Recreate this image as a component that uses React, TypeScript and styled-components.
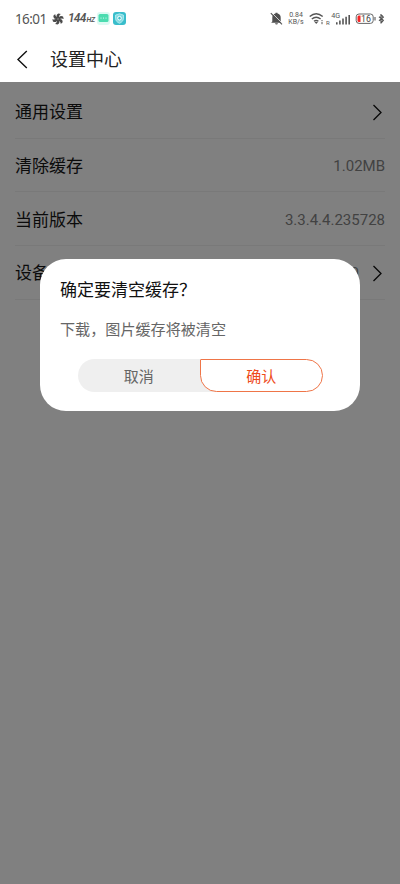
import React from "react";
import styled, { createGlobalStyle } from "styled-components";

const Global = createGlobalStyle`
  * { box-sizing: border-box; }
  body {
    margin: 0;
    background: #808080;
    font-family: Roboto, "Noto Sans CJK SC", sans-serif;
    color: #111;
  }
`;

const Screen = styled.div`
  position: relative;
  width: 400px;
  height: 884px;
  overflow: hidden;
  background: #808080;
`;

const StatusBar = styled.div`
  display: flex;
  justify-content: space-between;
  height: 37px;
  padding: 0 15px;
  background: #fff;
  color: #555;
`;

const StatusGroup = styled.div`
  display: flex;
  align-items: center;
  height: 37px;
`;

const Clock = styled.span`
  width: 31px;
  font: 400 13.5px/16px "Noto Sans", sans-serif;
  letter-spacing: -0.6px;
  white-space: nowrap;
  margin-right: 6px;
`;

const RefreshRate = styled.span`
  display: flex;
  align-items: baseline;
  width: 26px;
  margin: 0 3px 0 4px;
  font: italic 600 12px/14px Roboto, sans-serif;
  letter-spacing: -0.8px;
  small { font-size: 7px; letter-spacing: -0.4px; margin-left: 1px; }
`;

const NetSpeed = styled.span`
  display: flex;
  flex-direction: column;
  align-items: center;
  width: 16px;
  margin: 0 5px;
  font: 400 7px/7px Roboto, sans-serif;
  white-space: nowrap;
`;

const TitleBar = styled.header`
  display: flex;
  align-items: center;
  height: 45px;
  padding: 0 16px;
  background: #fff;
`;

const Title = styled.h1`
  margin: 0 0 0 18px;
  font-size: 18px;
  line-height: 26px;
  font-weight: 400;
  color: #222;
`;

const List = styled.main`
  padding: 3px 15px 0;
`;

const Row = styled.div`
  display: flex;
  align-items: center;
  justify-content: space-between;
  height: 53.7px;
  padding-top: 2px;
  border-bottom: 1px solid #797979;
`;

const Label = styled.span`
  font-size: 17px;
  line-height: 24px;
  color: #0b0b0b;
`;

const Value = styled.span<{ $withArrow?: boolean }>`
  display: flex;
  align-items: center;
  gap: 14px;
  margin-right: ${(p) => (p.$withArrow ? "2px" : "0")};
  font-size: 15px;
  line-height: 24px;
  color: #424242;
`;

const Dialog = styled.section`
  position: absolute;
  left: 40px;
  top: 259px;
  width: 320px;
  height: 152px;
  padding: 18px 20px 0;
  border-radius: 26px;
  background: #fff;
`;

const DialogTitle = styled.h2`
  margin: 0;
  font-size: 17px;
  line-height: 26px;
  font-weight: 400;
  color: #111;
`;

const Message = styled.p`
  margin: 16px 0 0;
  font-size: 15.1px;
  line-height: 22px;
  color: #666;
`;

const Actions = styled.div`
  display: flex;
  width: 245px;
  height: 33px;
  margin: 18px 0 0 17.5px;
  border-radius: 16.5px;
  background: linear-gradient(to right, #efefef 140px, transparent 140px);
`;

const Action = styled.button<{ $primary?: boolean }>`
  width: 122.5px;
  height: 33px;
  padding: 2px 0 0;
  border: ${(p) => (p.$primary ? "1px solid #ef7548" : "0")};
  border-radius: ${(p) => (p.$primary ? "1px 16.5px 16.5px 16.5px" : "0")};
  background: ${(p) => (p.$primary ? "#fff" : "transparent")};
  color: ${(p) => (p.$primary ? "#ee4b1a" : "#666")};
  font: 400 15px/22px Roboto, "Noto Sans CJK SC", sans-serif;
`;

const BackIcon = () => (
  <svg width="16" height="20" viewBox="0 0 16 20" fill="none" stroke="#111" strokeWidth="1.4">
    <path d="M10.8 1 2 9.5 10.8 18" />
  </svg>
);

const ArrowIcon = () => (
  <svg width="10" height="18" viewBox="0 0 10 18" fill="none" stroke="#080808" strokeWidth="1.3">
    <path d="M.5 2 8 9.5.5 17" />
  </svg>
);

const FanIcon = () => (
  <svg width="12" height="12" viewBox="-6 -6 12 12" fill="#4b4b4b">
    {[0, 60, 120, 180, 240, 300].map((a) => (
      <path key={a} transform={`rotate(${a})`} d="M0-.5C-2-2-2-4.4.4-5.6L2.9-4.9C1.2-4 .9-2.4 1.2-.3Z" />
    ))}
  </svg>
);

const ChatIcon = () => (
  <svg width="13" height="13" viewBox="0 0 13 13">
    <rect width="13" height="13" rx="3" fill="#dcfaf3" />
    <path d="M3 2h7q1.5 0 1.5 1.5v5Q11.5 10 10 10H3Q1.5 10 1.5 8.5v-5Q1.5 2 3 2Z" fill="#4bdcb0" />
    <g fill="#e9fff6"><circle cx="4" cy="6" r=".6" /><circle cx="6.5" cy="6" r=".6" /><circle cx="9" cy="6" r=".6" /></g>
  </svg>
);

const ShieldApp = styled.svg`
  margin-left: 3px;
`;

const ShieldIcon = () => (
  <ShieldApp width="13" height="13" viewBox="0 0 13 13">
    <rect width="13" height="13" rx="3" fill="#39bdcb" />
    <path d="m6.5 1.8 4 1.3v3.2c0 2.4-1.7 4-4 5-2.3-1-4-2.6-4-5V3.1Z" fill="#83dbe2" stroke="#c8f3f5" strokeWidth=".7" />
    <circle cx="6.5" cy="6.2" r="1.8" fill="#39bdcb" stroke="#fff" />
  </ShieldApp>
);

const MutedBell = () => (
  <svg width="13" height="13" viewBox="0 0 13 13">
    <path d="M2.3 9.5V5.7Q2.3 2.3 5.5 1.6V.8h2v.8q3.2.7 3.2 4.1v3.8l1.1 1.3H1.2ZM5 11.2h3q-.3 1.2-1.5 1.2T5 11.2Z" fill="#505050" />
    <path d="M1.5.5 13 12" stroke="#fff" strokeWidth=".8" />
    <path d="m.8 1.2 11.2 11.2" stroke="#505050" strokeWidth="1.1" />
  </svg>
);

const WifiIcon = () => (
  <svg width="16" height="13" viewBox="0 0 16 13" fill="none" stroke="#555" strokeWidth="1.4">
    <path d="M.7 4.5q6.5-5.6 13 0M2.8 7q4.4-3.6 8.8 0M5 9.3q2.2-1.7 4.4 0" />
    <path d="m5.5 10 1.7 2L9 10Z" fill="#555" stroke="none" />
    <path d="M13 8v1.2M13 10v2.2" strokeWidth="1" />
  </svg>
);

const SignalIcon = () => (
  <svg width="30" height="14" viewBox="0 0 30 14" fill="#555">
    <text x="1" y="13" fontSize="6" fontFamily="Roboto">R</text>
    <text x="6.2" y="6.3" fontSize="7.2" fontFamily="Roboto">4G</text>
    <path d="M11 10.2h1.6v2.3H11zM14.1 8.5h1.6v4h-1.6zM17.2 6.5h1.6v6h-1.6zM20.3 4.7h1.6v7.8h-1.6zM23.4 3H25v9.5h-1.6z" />
  </svg>
);

const BatteryIcon = () => (
  <svg width="30" height="12" viewBox="0 0 30 12">
    <rect x="1.2" y="1" width="17" height="9.4" rx="2.8" fill="#fff" stroke="#666" strokeWidth="1" />
    <path d="M3.8 2.5H5.5V9H3.8Q2.5 9 2.5 7.5V4Q2.5 2.5 3.8 2.5Z" fill="#f52424" />
    <text x="6" y="8.9" fontSize="8.8" fontFamily="Roboto" fill="#444">16</text>
    <path d="M20 4v3.5" stroke="#666" strokeWidth="1.2" />
    <path d="M26 1v9.5M24 3.7l4.3 3.6L26 10M24 7.7l4.3-3.6L26 1.5" fill="none" stroke="#555" strokeWidth="1.2" />
  </svg>
);

export default function App() {
  return (
    <>
      <Global />
      <Screen>
        <StatusBar>
          <StatusGroup>
            <Clock>16:01</Clock>
            <FanIcon />
            <RefreshRate>144<small>HZ</small></RefreshRate>
            <ChatIcon />
            <ShieldIcon />
          </StatusGroup>
          <StatusGroup>
            <MutedBell />
            <NetSpeed><span>0.84</span><span>KB/s</span></NetSpeed>
            <WifiIcon />
            <SignalIcon />
            <BatteryIcon />
          </StatusGroup>
        </StatusBar>
        <TitleBar>
          <BackIcon />
          <Title>设置中心</Title>
        </TitleBar>
        <List>
          <Row><Label>通用设置</Label><Value $withArrow><ArrowIcon /></Value></Row>
          <Row><Label>清除缓存</Label><Value>1.02MB</Value></Row>
          <Row><Label>当前版本</Label><Value>3.3.4.4.235728</Value></Row>
          <Row><Label>设备</Label><Value $withArrow>0<ArrowIcon /></Value></Row>
        </List>
        <Dialog role="dialog">
          <DialogTitle>确定要清空缓存？</DialogTitle>
          <Message>下载，图片缓存将被清空</Message>
          <Actions>
            <Action>取消</Action>
            <Action $primary>确认</Action>
          </Actions>
        </Dialog>
      </Screen>
    </>
  );
}
